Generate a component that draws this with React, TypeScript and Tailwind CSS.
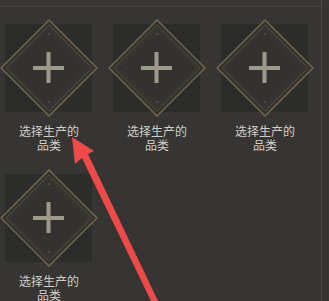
const CELLS = [0, 1, 2, 3]

function Slot() {
  return (
    <div className="flex w-[98px] flex-col items-center">
      <div className="relative h-[98px] w-[98px]">
        <div className="absolute left-[5px] top-[5px] h-[88px] w-[87px] bg-[#2c2c2b]" />
        <svg className="absolute inset-0" width="98" height="98" viewBox="0 0 98 98">
          <polygon points="49,1 97,49 49,97 1,49" fill="#33322f" stroke="#7a6b4b" strokeWidth="1.3" />
          <polygon points="49,6 92,49 49,92 6,49" fill="none" stroke="#564d3d" strokeWidth="1" />
          <polygon points="49,9 89,49 49,89 9,49" fill="none" stroke="#45403a" strokeWidth="0.8" />
          <circle cx="49" cy="15" r="1.3" fill="#554c3d" />
          <circle cx="49" cy="83" r="1.3" fill="#554c3d" />
          <rect x="33" y="47" width="31" height="4" fill="#9f998c" />
          <rect x="46.5" y="33" width="4" height="31" fill="#9f998c" />
        </svg>
      </div>
      <div className="mt-[7px] text-center font-['Noto_Sans_CJK_SC',sans-serif] text-[12px] leading-[14px] text-[#d2cec6]">
        <div>选择生产的</div>
        <div>品类</div>
      </div>
    </div>
  )
}

export default function App() {
  return (
    <div className="relative h-[301px] w-[329px] overflow-hidden bg-[#363534]">
      <div className="h-[301px] w-[322px] border-r border-[#4a4846]">
        <div className="h-[7px] border-b border-[#434140] bg-[#3a3836]" />
        <div className="grid grid-cols-[98px_98px_98px] gap-x-[10px] gap-y-[17px] pt-[12px]">
          {CELLS.map((i) => (
            <Slot key={i} />
          ))}
        </div>
      </div>

      {/* red annotation arrow */}
      <svg className="pointer-events-none absolute inset-0" width="329" height="301" viewBox="0 0 329 301">
        <polygon points="72,137 94,151 88,154 158,301 151,301 82,158 75,164" fill="#ef4a4a" />
      </svg>
    </div>
  )
}
